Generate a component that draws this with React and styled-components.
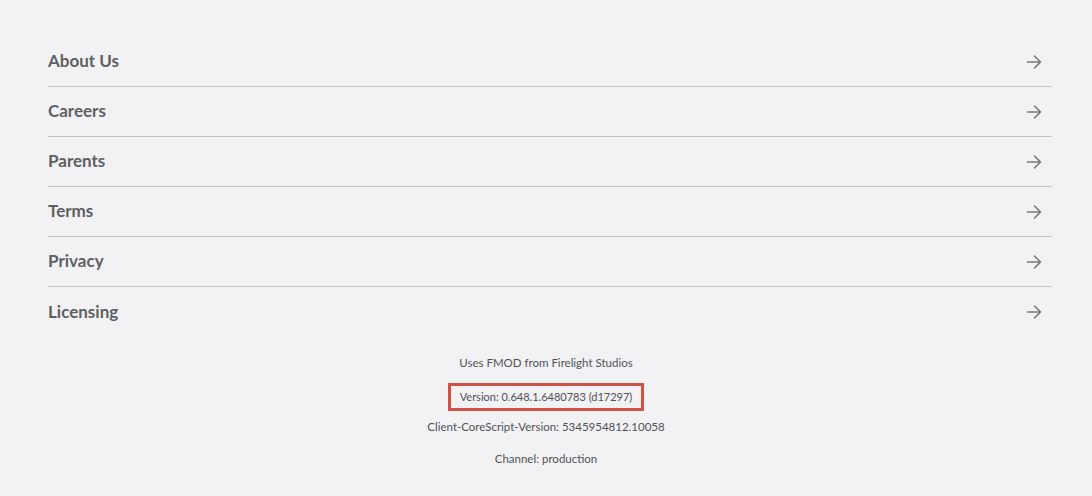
import React from 'react'
import styled, { createGlobalStyle } from 'styled-components'

const links = ['About Us', 'Careers', 'Parents', 'Terms', 'Privacy', 'Licensing']

function Arrow() {
  return (
    <svg width="16" height="14" viewBox="0 0 16 14" fill="none" stroke="#77787c" strokeWidth="1.6" strokeLinecap="round" strokeLinejoin="round">
      <path d="M1.5 7h13M8.5 1l6 6-6 6" />
    </svg>
  )
}

function App() {
  return (
    <>
      <GlobalStyle />
      <SCPage>
        <SCList>
          {links.map((l, i) => (
            <SCRow key={l} last={i === links.length - 1}>
              <SCLabel>{l}</SCLabel>
              <Arrow />
            </SCRow>
          ))}
        </SCList>
        <SCFooter>
          <SCInfo>Uses FMOD from Firelight Studios</SCInfo>
          <SCInfo boxed>Version: 0.648.1.6480783 (d17297)</SCInfo>
          <SCInfo>Client-CoreScript-Version: 5345954812.10058</SCInfo>
          <SCInfo>Channel: production</SCInfo>
        </SCFooter>
      </SCPage>
    </>
  )
}

export default App

const GlobalStyle = createGlobalStyle`
  body {
    margin: 0;
    background: #f2f2f4;
    font-family: Lato, 'Liberation Sans', sans-serif;
  }
`

const SCPage = styled.div`
  width: 1092px;
  height: 496px;
  padding: 37px 40px 0 48px;
  box-sizing: border-box;
`

const SCList = styled.div`
  display: flex;
  flex-direction: column;
`

const SCRow = styled.div`
  height: 50px;
  display: flex;
  align-items: center;
  justify-content: space-between;
  padding-right: 10px;
  border-bottom: ${(props) => props.last ? 'none' : '1px solid #c4c4c7'};
  box-sizing: border-box;
`

const SCLabel = styled.span`
  color: #5e5f63;
  font-size: 17px;
  font-weight: 700;
  padding-bottom: 2px;
`

const SCFooter = styled.div`
  display: flex;
  flex-direction: column;
  align-items: center;
  padding-top: 15px;
  margin-left: -48px;
  margin-right: -40px;
`

const SCInfo = styled.div`
  color: #505155;
  font-size: ${(props) => props.boxed ? '11px' : '11.5px'};
  white-space: nowrap;
  box-sizing: border-box;
  text-align: center;
  height: ${(props) => props.boxed ? '28px' : '22px'};
  line-height: 22px;
  width: ${(props) => props.boxed ? '196px' : 'auto'};
  border: ${(props) => props.boxed ? '3px solid #cd5344' : 'none'};
  margin-top: ${(props) => props.boxed ? '-1px' : '0'};
  margin-bottom: ${(props) => props.boxed ? '5px' : '10px'};
`
